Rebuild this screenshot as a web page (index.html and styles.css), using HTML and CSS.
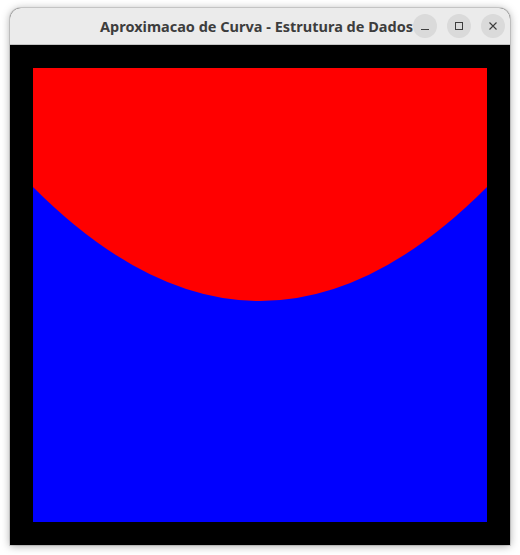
FILE: index.html
```html
<!DOCTYPE html>
<html>
<head>
<meta charset="utf-8">
<link rel="stylesheet" href="styles.css">
</head>
<body>
<div class="window">
  <div class="titlebar">
    <div class="title">Aproximacao de Curva - Estrutura de Dados</div>
    <div class="controls">
      <span class="btn"><svg width="10" height="10" viewBox="0 0 10 10"><path d="M1 8.5 H9" stroke="#3d3d3d" stroke-width="1"/></svg></span>
      <span class="btn"><svg width="10" height="10" viewBox="0 0 10 10"><rect x="1.5" y="1.5" width="7" height="7" fill="none" stroke="#3d3d3d" stroke-width="1"/></svg></span>
      <span class="btn"><svg width="10" height="10" viewBox="0 0 10 10"><path d="M1.5 1.5 L8.5 8.5 M8.5 1.5 L1.5 8.5" stroke="#3d3d3d" stroke-width="1.1"/></svg></span>
    </div>
  </div>
  <div class="canvas">
    <svg class="plot" width="454" height="454" viewBox="0 0 454 454">
      <rect x="0" y="0" width="454" height="454" fill="#0000ff"/>
      <path d="M0 0 L0 119 Q227 347 454 119 L454 0 Z" fill="#ff0000"/>
    </svg>
  </div>
</div>
</body>
</html>
```
FILE: styles.css
```css
html, body {
  margin: 0;
  padding: 0;
  background: #ffffff;
}
body {
  width: 520px;
  height: 555px;
  overflow: hidden;
}
.window {
  margin: 8px 0 0 10px;
  width: 500px;
  border-radius: 11px 11px 0 0;
  overflow: hidden;
  box-shadow: 0 1px 8px rgba(0,0,0,0.35), 0 0 0 1px rgba(0,0,0,0.12);
  background: #000;
}
.titlebar {
  height: 36px;
  background: #ebebeb;
  border-bottom: 1px solid #c4c4c4;
  display: flex;
  align-items: center;
  box-sizing: border-box;
  height: 37px;
  position: relative;
}
.title {
  font-family: "Noto Sans", "DejaVu Sans", sans-serif;
  font-weight: bold;
  font-size: 14.5px;
  color: #3d3d3d;
  margin-left: 90px;
  white-space: nowrap;
}
.controls {
  display: flex;
  gap: 10px;
  margin-left: auto;
  margin-right: 6px;
}
.btn {
  width: 24px;
  height: 24px;
  border-radius: 50%;
  background: #dadada;
  display: flex;
  align-items: center;
  justify-content: center;
}
.canvas {
  width: 500px;
  height: 500px;
  background: #000;
  padding: 23px;
  box-sizing: border-box;
}
.plot {
  display: block;
}
```
